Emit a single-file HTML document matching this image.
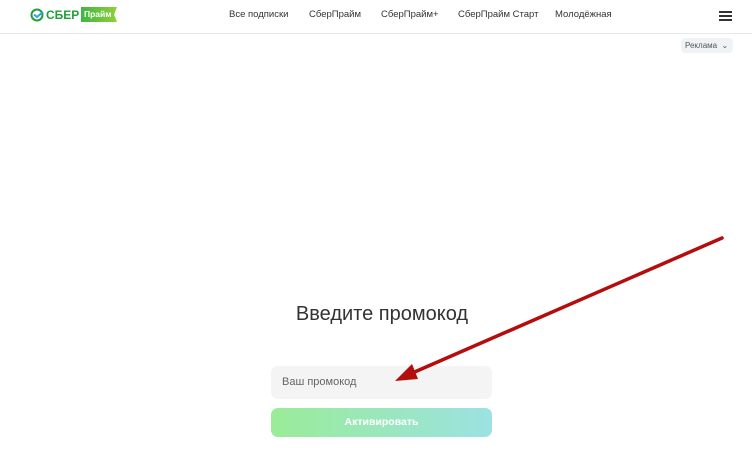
<!DOCTYPE html>
<html><head><meta charset="utf-8"><style>
body{margin:0;width:752px;height:473px;background:#fff;font-family:"Liberation Sans",sans-serif;position:relative;overflow:hidden}
.hdr{position:absolute;left:0;top:0;width:752px;height:33px;border-bottom:1px solid #e8e8e8}
.nav{position:absolute;top:9px;font-size:9.5px;color:#333}
.ham{position:absolute;left:719px;top:11px;width:13px;height:2px;background:#333;box-shadow:0 4px 0 #333,0 8px 0 #333}
.rek{position:absolute;left:681px;top:38px;width:52px;height:15px;background:#f0f3f5;border-radius:4px;font-size:8px;color:#555;line-height:15px;padding-left:4px;box-sizing:border-box}
h1{position:absolute;left:0;width:764px;top:303px;margin:0;text-align:center;font-weight:normal;font-size:20px;color:#333}
.inp{position:absolute;left:271px;top:366px;width:221px;height:33px;background:#f4f4f4;border-radius:7px;font-size:11px;color:#666;line-height:33px;padding-left:11px;box-sizing:border-box}
.btn{position:absolute;left:271px;top:408px;width:221px;height:29px;border-radius:7px;background:linear-gradient(90deg,#9aec98,#9be2e2);color:#fff;font-weight:bold;font-size:10.5px;text-align:center;line-height:29px}
</style></head><body>
<div class="hdr">
<svg style="position:absolute;left:30px;top:8px" width="14" height="14" viewBox="0 0 14 14"><circle cx="7" cy="7" r="5.5" fill="none" stroke="#21a038" stroke-width="2"/><path d="M4 6.5l3 2.5 6-5" fill="none" stroke="#2fa0e0" stroke-width="2"/></svg>
<div style="position:absolute;left:46px;top:8px;font-weight:bold;font-size:12px;color:#21a038">СБЕР</div>
<div style="position:absolute;left:81px;top:7px;width:36px;height:15px;background:linear-gradient(90deg,#3fb542,#8fd13a);clip-path:polygon(0 0,100% 0,92% 50%,100% 100%,0 100%);color:#fff;font-size:8.5px;font-weight:bold;line-height:15px;padding-left:3px;box-sizing:border-box">Прайм</div>
<div class="nav" style="left:229px">Все подписки</div>
<div class="nav" style="left:309px">СберПрайм</div>
<div class="nav" style="left:381px">СберПрайм+</div>
<div class="nav" style="left:458px">СберПрайм Старт</div>
<div class="nav" style="left:555px">Молодёжная</div>
<div class="ham"></div>
</div>
<div class="rek">Реклама &nbsp;⌄</div>
<h1>Введите промокод</h1>
<div class="inp">Ваш промокод</div>
<div class="btn">Активировать</div>
<svg style="position:absolute;left:0;top:0" width="752" height="473"><line x1="722" y1="238" x2="410" y2="374" stroke="#b50d0d" stroke-width="3.5" stroke-linecap="round"/><polygon points="395,381 412,364 418,379" fill="#b50d0d"/></svg>
</body></html>
